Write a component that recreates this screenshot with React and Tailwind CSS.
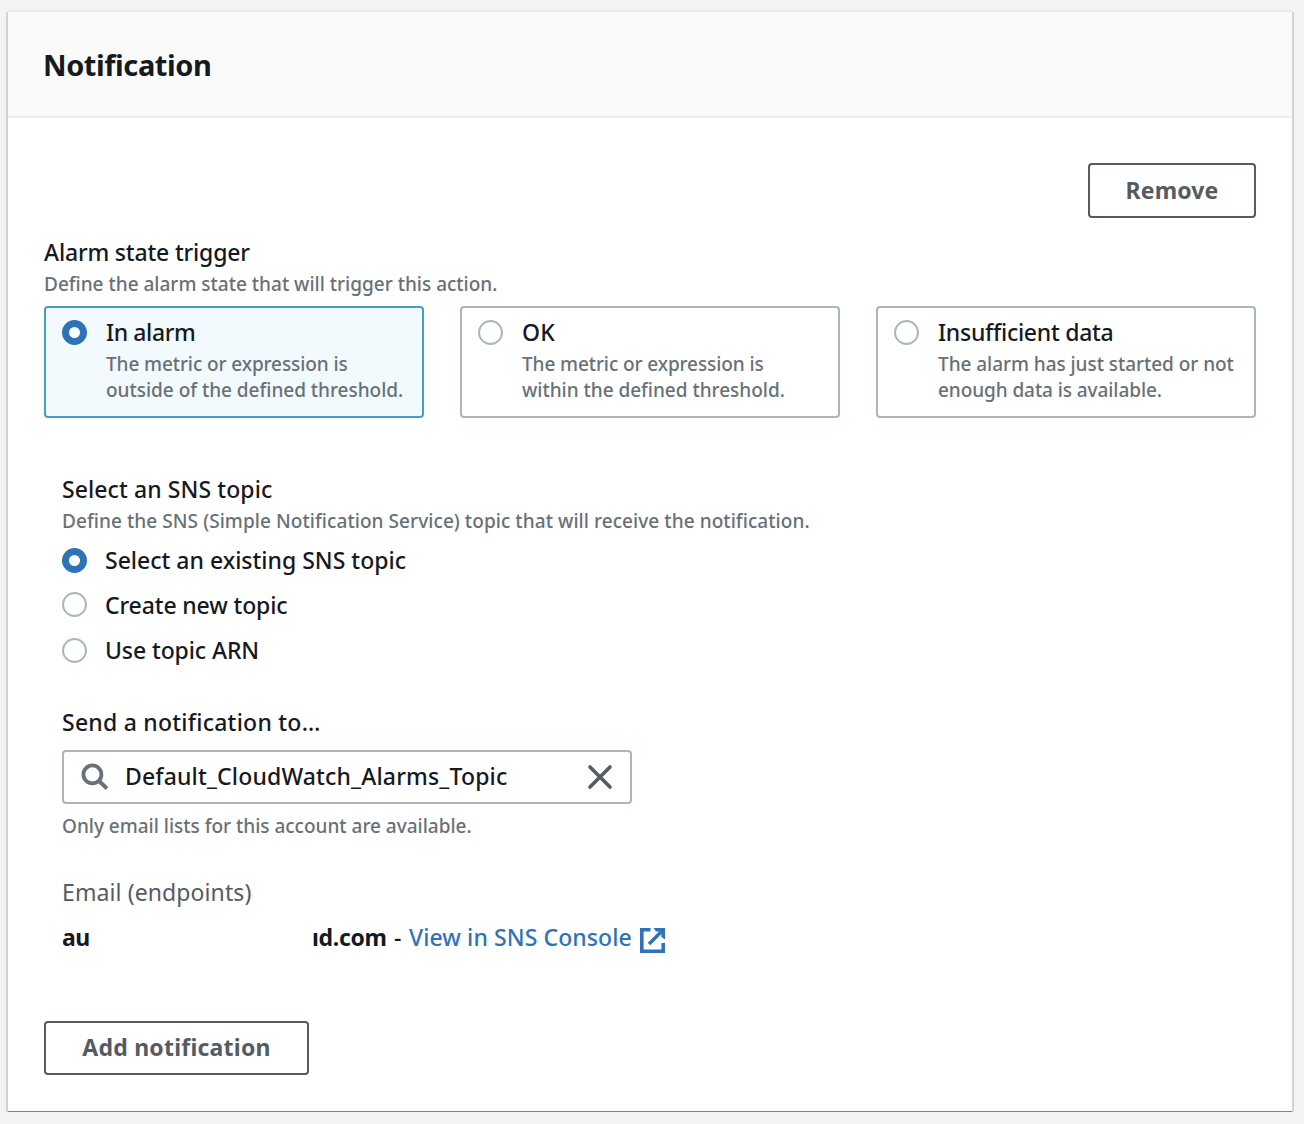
function Radio({ checked, className = "" }) {
  return checked ? (
    <span className={`block size-[25px] shrink-0 rounded-full border-[7.5px] border-[#2e73b8] bg-white ${className}`} />
  ) : (
    <span className={`block size-[25px] shrink-0 rounded-full border-2 border-[#aab7b8] bg-white ${className}`} />
  );
}

function Tile({ checked, title, titleClass, lines }) {
  return (
    <div
      className={`flex h-[112px] w-[380px] rounded-[4px] border-2 pl-4 ${
        checked ? "border-[#449fc6] bg-[#f2fafd]" : "border-[#aab7b8] bg-white"
      }`}
    >
      <Radio checked={checked} className="mt-3" />
      <div className="ml-[19px] pt-[9px]">
        <div className={`h-[34px] text-[23px] leading-[30px] text-[#16191f] ${titleClass}`}>{title}</div>
        {lines.map(([text, cls]) => (
          <div key={text} className={`h-[26px] text-[19px] leading-[26px] whitespace-nowrap text-[#687078] ${cls}`}>
            {text}
          </div>
        ))}
      </div>
    </div>
  );
}

function Option({ checked, label, className, radioClass = "" }) {
  return (
    <div className="flex h-[45px] items-center">
      <Radio checked={checked} className={radioClass} />
      <span className={`ml-[18px] pb-[2px] text-[23px] leading-[30px] text-[#16191f] ${className}`}>{label}</span>
    </div>
  );
}

export default function App() {
  return (
    <div className="h-[1124px] w-[1304px] bg-[#f2f4f4] px-[6px] pt-[10px] font-['Noto_Sans',sans-serif] font-medium whitespace-nowrap">
      <div className="mx-[2px] h-[2px] w-[1284px] bg-[#eaeded]" />
      <section className="h-[1100px] w-[1288px] border-x-2 border-[#d0d4d4] bg-white">
        <header className="h-[106px] border-b-2 border-[#eaeded] bg-[#fafafa] pl-[35px] pt-[33px]">
          <h2 className="text-[29px] leading-10 font-bold tracking-[-0.42px] text-[#16191f]">Notification</h2>
        </header>

        <div className="h-[994px] border-b border-[#7b8787] px-9 pt-[45px]">
          <div className="flex justify-end">
            <button className="h-[55px] w-[168px] rounded-[4px] border-2 border-[#545b64] text-[23px] font-bold tracking-[0.15px] text-[#545b64]">
              Remove
            </button>
          </div>

          <div className="mt-[19px] h-[32px] text-[23px] leading-[30px] tracking-[-0.18px] text-[#16191f]">
            Alarm state trigger
          </div>
          <div className="h-[37px] text-[19px] leading-[31px] text-[#687078]">
            Define the alarm state that will trigger this action.
          </div>
          <div className="flex gap-9">
            <Tile
              checked
              title="In alarm"
              titleClass="tracking-[-0.4px]"
              lines={[
                ["The metric or expression is", "tracking-[-0.1px]"],
                ["outside of the defined threshold.", "tracking-[-0.02px]"],
              ]}
            />
            <Tile
              title="OK"
              titleClass="tracking-[0.2px]"
              lines={[
                ["The metric or expression is", "tracking-[-0.1px]"],
                ["within the defined threshold.", "tracking-[-0.02px]"],
              ]}
            />
            <Tile
              title="Insufficient data"
              titleClass="tracking-[-0.27px]"
              lines={[
                ["The alarm has just started or not", "tracking-[-0.05px]"],
                ["enough data is available.", "tracking-[-0.08px]"],
              ]}
            />
          </div>

          <div className="mt-14 h-[486px] pl-[18px]">
            <div className="h-[32px] text-[23px] leading-[30px] tracking-[0.09px] text-[#16191f]">
              Select an SNS topic
            </div>
            <div className="h-[32px] text-[19px] leading-[30px] tracking-[0.07px] text-[#687078]">
              Define the SNS (Simple Notification Service) topic that will receive the notification.
            </div>
            <Option checked label="Select an existing SNS topic" className="" />
            <Option label="Create new topic" className="tracking-[-0.13px]" radioClass="-mt-[2px]" />
            <Option label="Use topic ARN" className="tracking-[-0.1px]" />

            <div className="mt-[34px] h-[43px] text-[23px] leading-[30px] tracking-[0.24px] text-[#16191f]">
              Send a notification to…
            </div>
            <div className="flex h-[54px] w-[570px] items-center rounded-[4px] border-2 border-[#aab7b8] pr-[17px] pl-[17px]">
              <svg className="size-7 shrink-0" viewBox="0 0 28 28" fill="none" stroke="#687078" strokeWidth="3.8">
                <circle cx="11.4" cy="11.4" r="9" />
                <path d="M17.5 17.5l8.5 8" />
              </svg>
              <span className="ml-4 flex-1 pb-[2px] text-[23px] leading-[30px] tracking-[0.16px] text-[#16191f]">
                Default_CloudWatch_Alarms_Topic
              </span>
              <svg className="-mt-px size-[26px] shrink-0" viewBox="0 0 26 26" fill="none" stroke="#545b64" strokeWidth="3.6" strokeLinecap="round">
                <path d="M3 3l20 20M23 3L3 23" />
              </svg>
            </div>
            <div className="mt-[7px] h-[66px] text-[19px] leading-[30px] tracking-[-0.01px] text-[#687078]">
              Only email lists for this account are available.
            </div>

            <div className="h-[45px] text-[23px] leading-[30px] font-normal tracking-[0.1px] text-[#545b64]">
              Email (endpoints)
            </div>
            <div className="flex h-[30px] text-[23px] leading-[30px] text-[#16191f]">
              <span className="w-[250px] font-bold tracking-[-0.5px]">au</span>
              <span className="w-[82px] font-bold tracking-[-0.3px]">ıd.com</span>
              <span className="w-[15px]">-</span>
              <a className="flex tracking-[0.09px] text-[#2e73b8]">
                <span className="w-[230px]">View in SNS Console</span>
                <svg className="mt-[5px] size-[27px]" viewBox="0 0 27 27" fill="none" stroke="#2e73b8" strokeWidth="3.6">
                  <path d="M11.5 2.8H2.8V24.2H24.2V16" />
                  <path d="M22.5 4.5L10 17" />
                  <path d="M14.5 1H26V12.5L22.4 10V4.6H17z" fill="#2e73b8" stroke="none" />
                </svg>
              </a>
            </div>
          </div>

          <button className="mt-[61px] block h-[54px] w-[265px] rounded-[4px] border-2 border-[#545b64] pb-[2px] text-[23px] font-bold tracking-[0.23px] text-[#545b64]">
            Add notification
          </button>
        </div>
      </section>
    </div>
  );
}
